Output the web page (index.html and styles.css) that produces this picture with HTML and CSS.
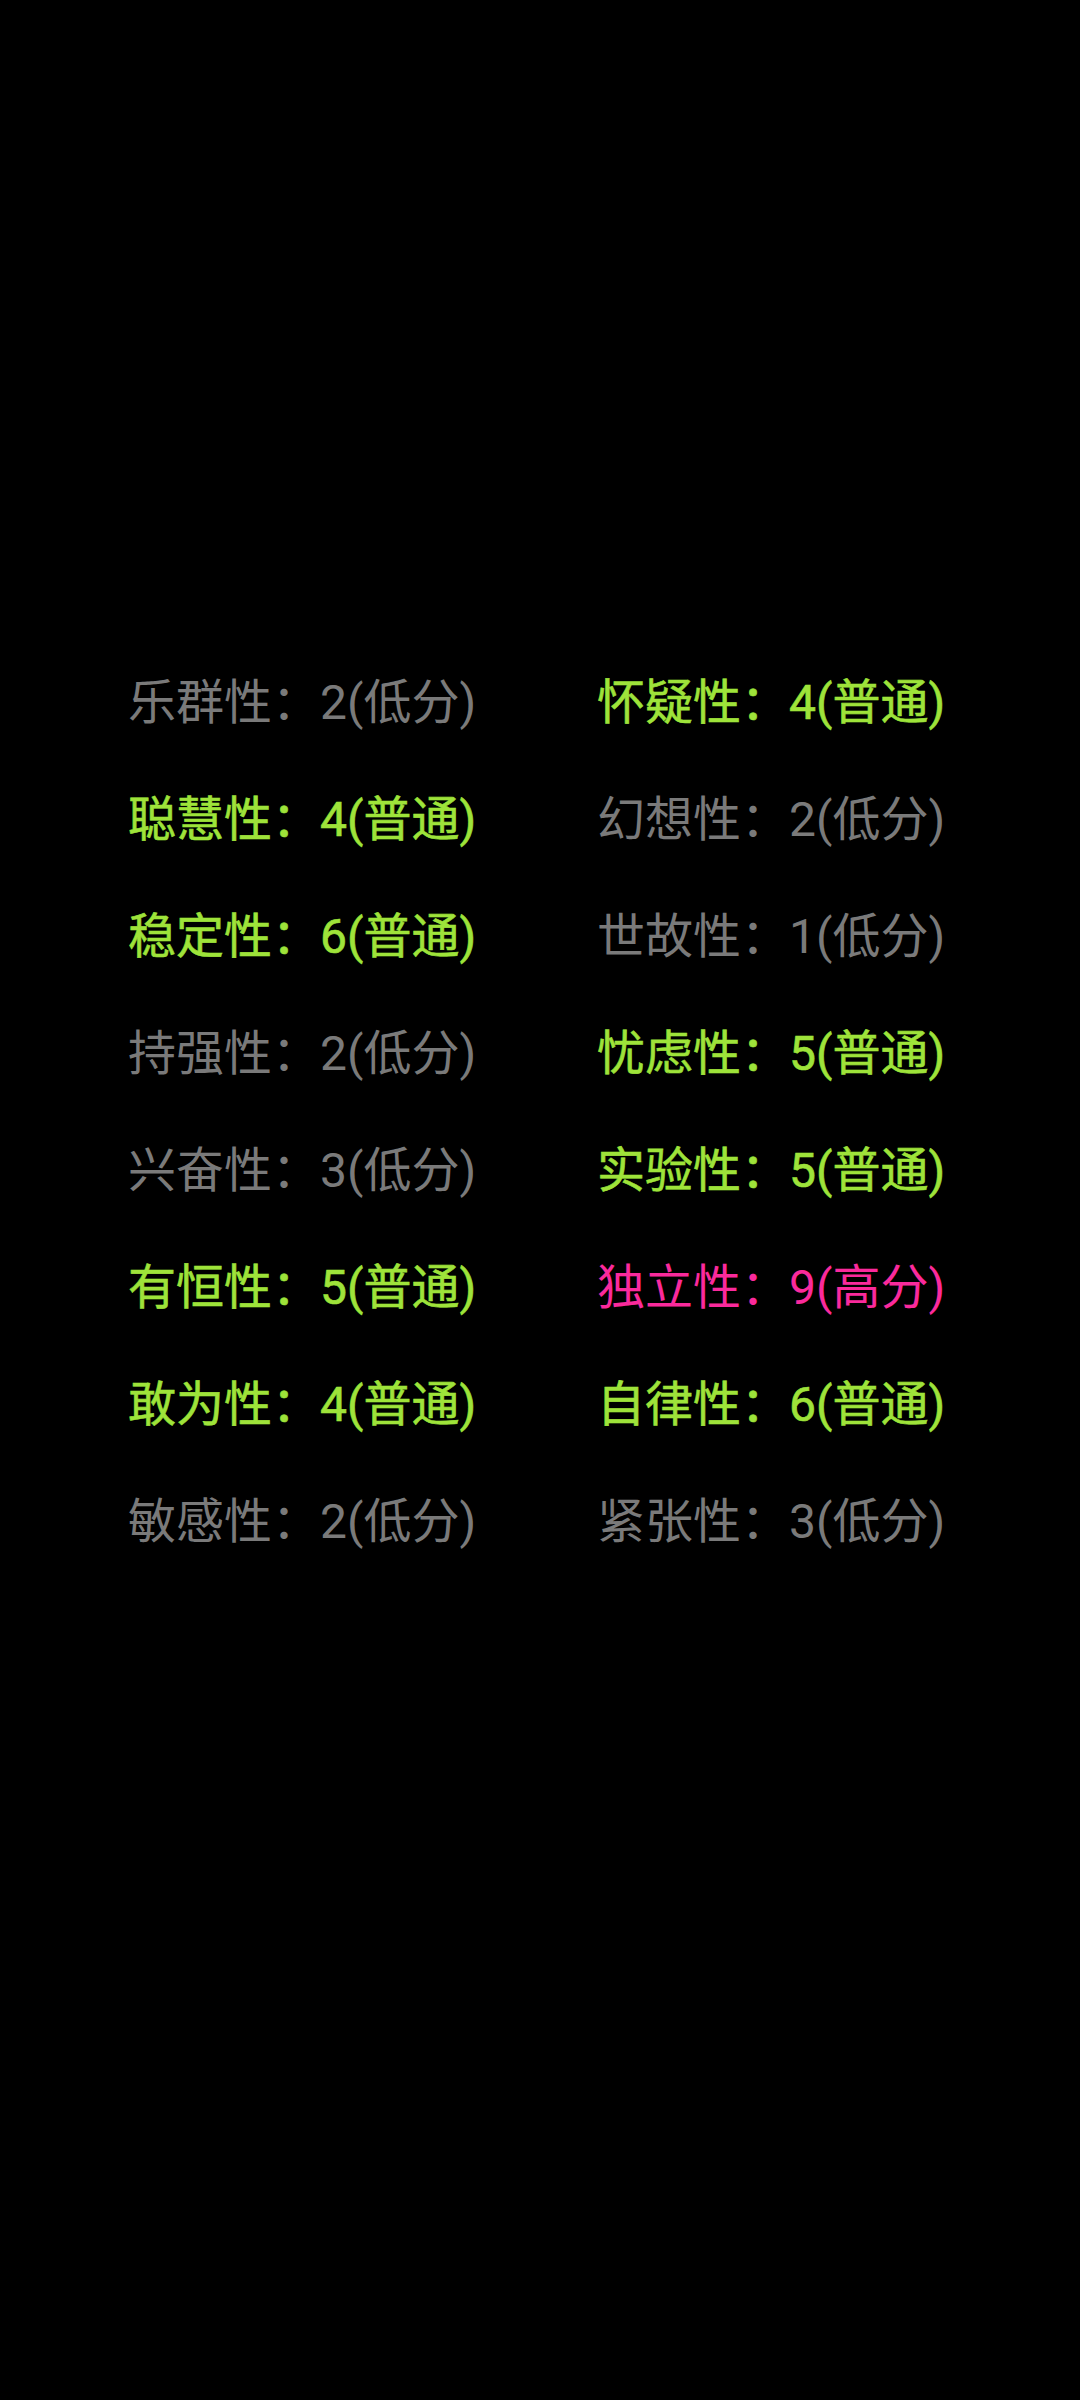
FILE: index.html
```html
<!DOCTYPE html>
<html lang="zh-CN">
<head>
    <meta charset="UTF-8">
    <meta name="viewport" content="width=device-width, initial-scale=1.0">
    <title>人格因素</title>
    <link rel="stylesheet" href="styles.css">
</head>
<body>
    <!-- 16PF results -->
    <div class="factor-grid">
        <div class="factor low">乐群性：2(低分)</div>
        <div class="factor normal">怀疑性：4(普通)</div>

        <div class="factor normal">聪慧性：4(普通)</div>
        <div class="factor low">幻想性：2(低分)</div>

        <div class="factor normal">稳定性：6(普通)</div>
        <div class="factor low">世故性：1(低分)</div>

        <div class="factor low">持强性：2(低分)</div>
        <div class="factor normal">忧虑性：5(普通)</div>

        <div class="factor low">兴奋性：3(低分)</div>
        <div class="factor normal">实验性：5(普通)</div>

        <div class="factor normal">有恒性：5(普通)</div>
        <div class="factor high">独立性：9(高分)</div>

        <div class="factor normal">敢为性：4(普通)</div>
        <div class="factor normal">自律性：6(普通)</div>

        <div class="factor low">敏感性：2(低分)</div>
        <div class="factor low">紧张性：3(低分)</div>
    </div>
</body>
</html>
```

FILE: styles.css
```css
body {
    margin: 0;
    padding: 0;
    background-color: #000000;
    font-family: Roboto, "Noto Sans CJK SC", sans-serif;
    min-height: 2400px;
}
.factor-grid {
    display: grid;
    grid-template-columns: 469px auto;
    padding: 644px 0 0 128px;
}
.factor {
    font-size: 48px;
    line-height: 117px;
    white-space: nowrap;
}
.low {
    color: #7a7a7a; /* gray */
}
.normal {
    color: #9ee33a; /* lime green */
    -webkit-text-stroke: 0.6px #9ee33a;
}
.high {
    color: #fa2a9c; /* pink */
}
```
